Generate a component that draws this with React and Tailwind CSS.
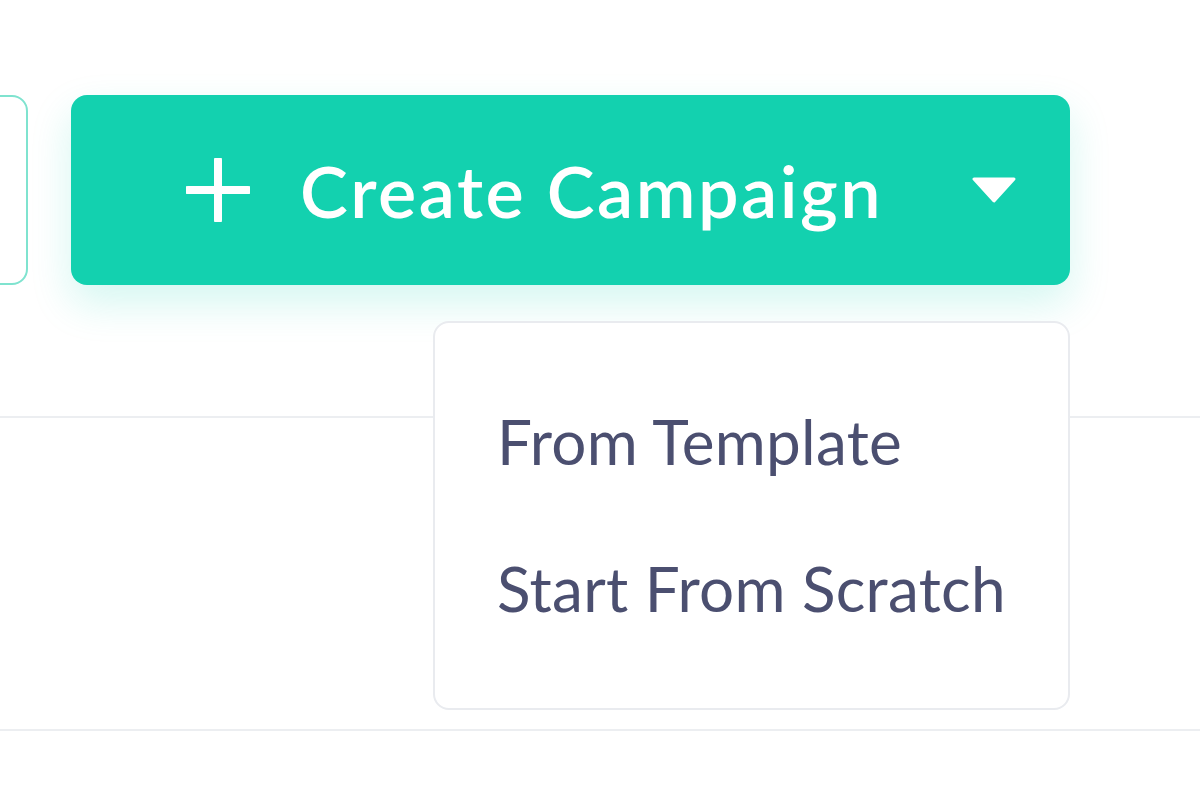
import React from "react";

const PlusIcon = () => (
  <svg width="64" height="64" viewBox="0 0 64 64" fill="none">
    <path d="M32 2v60M2 32h60" stroke="white" strokeWidth="8" strokeLinecap="round" />
  </svg>
);

const Caret = () => (
  <svg width="44" height="26" viewBox="0 0 44 26">
    <path d="M2 2h40L22 24z" fill="white" stroke="white" strokeWidth="3" strokeLinejoin="round" />
  </svg>
);

export default function App() {
  const items = ["From Template", "Start From Scratch"];

  return (
    <div
      className="w-[1200px] h-[788px] bg-white overflow-hidden pt-[95px]"
      style={{ fontFamily: "Lato, 'Noto Sans', sans-serif" }}
    >
      {/* Toolbar */}
      <div className="flex items-start gap-[43px] ml-[-172px]">
        <button className="w-[200px] h-[190px] shrink-0 rounded-[16px] border-2 border-[#7fe3cf] bg-white" />

        <div className="relative">
          <button className="w-[999px] h-[190px] rounded-[16px] bg-[#13d1af] flex items-center pl-[115px] pr-[54px] text-white shadow-[0_18px_40px_rgba(19,209,175,0.18)]">
            <PlusIcon />
            <span className="ml-[50px] text-[72px] font-semibold tracking-[2.5px] leading-none">
              Create Campaign
            </span>
            <span className="ml-auto flex items-center">
              <Caret />
            </span>
          </button>

          {/* Dropdown menu */}
          <div className="absolute right-0 top-[226px] w-[637px] h-[389px] rounded-[16px] border-2 border-[#e9ebef] bg-white z-10 flex flex-col pl-[62px] pt-[87px] gap-[85px]">
            {items.map((item) => (
              <div key={item} className="text-[62px] leading-none text-[#4b4f70] tracking-[0.3px]">
                {item}
              </div>
            ))}
          </div>
        </div>
      </div>

      {/* Table rows */}
      <div className="mt-[131px] border-t-2 border-[#eceef1] h-[315px] border-b-2" />
    </div>
  );
}
